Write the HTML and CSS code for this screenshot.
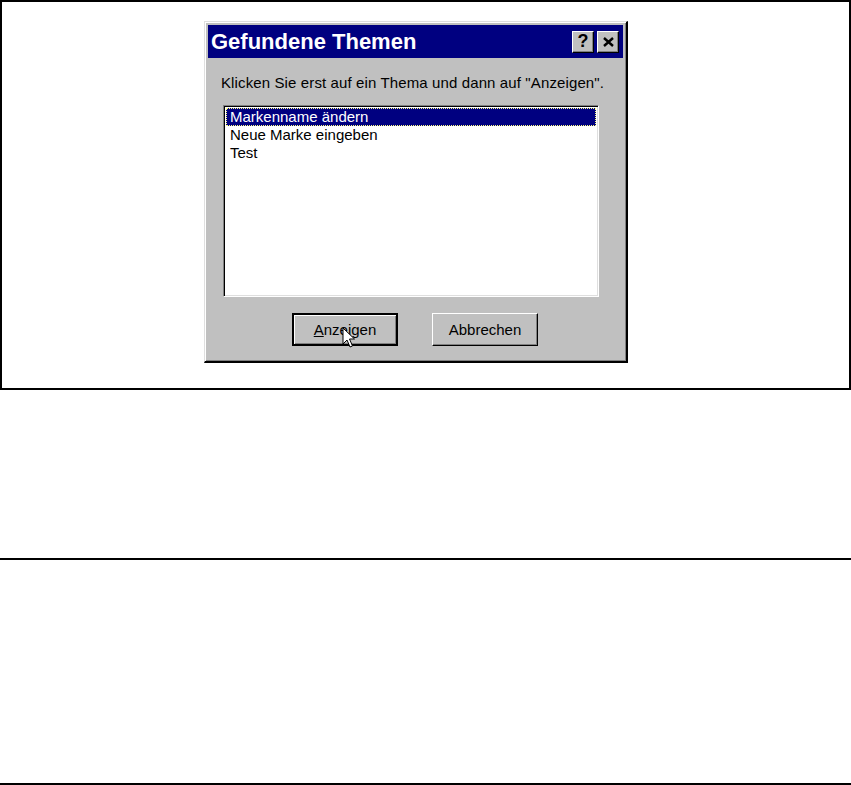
FILE: index.html
```html
<!doctype html>
<html lang="de">
<head>
<meta charset="utf-8">
<title>Gefundene Themen</title>
<link rel="stylesheet" href="styles.css">
</head>
<body>
<div class="frame">
  <div class="dialog">
    <div class="titlebar">
      <span class="title">Gefundene Themen</span>
      <span class="tbtns">
        <span class="tbtn">?</span>
        <span class="tbtn close">
          <svg width="11" height="10" viewBox="0 0 11 10"><path d="M1 1 L10 9 M10 1 L1 9" stroke="#000" stroke-width="2.4"/></svg>
        </span>
      </span>
    </div>
    <div class="body">
      <p class="hint">Klicken Sie erst auf ein Thema und dann auf "Anzeigen".</p>
      <div class="list">
        <div class="item sel">Markenname ändern</div>
        <div class="item">Neue Marke eingeben</div>
        <div class="item">Test</div>
      </div>
      <div class="buttons">
        <div class="btn default"><span><u>A</u>nzeigen</span></div>
        <div class="btn">Abbrechen</div>
        <svg class="cursor" width="14" height="22" viewBox="0 0 14 22"><path d="M1 1 L1 17 L5 13 L8 20 L10.5 19 L7.5 12 L12.5 12 Z" fill="#fff" stroke="#000" stroke-width="1"/></svg>
      </div>
    </div>
  </div>
</div>
<div class="band"></div>
<div class="band2"></div>
</body>
</html>
```
FILE: styles.css
```css
body {
    margin: 0;
    background: #fff;
    font-family: "Liberation Sans", Arial, sans-serif;
}
.frame {
    box-sizing: border-box;
    width: 851px;
    height: 390px;
    border: 2px solid #000;
    padding-top: 19px;
    padding-left: 202px;
}
.dialog {
    box-sizing: border-box;
    width: 424px;
    height: 342px;
    background: #c0c0c0;
    border-top: 1px solid #dfdfdf;
    border-left: 1px solid #dfdfdf;
    border-right: 2px solid #000;
    border-bottom: 2px solid #000;
    box-shadow: inset 1px 1px 0 #fff, inset -1px -1px 0 #808080;
    padding: 3px 3px 3px 3px;
}
.titlebar {
    height: 33px;
    background: #000080;
    display: flex;
    align-items: center;
    justify-content: space-between;
    padding: 0 4px 0 3px;
}
.title {
    color: #fff;
    font-weight: bold;
    font-size: 22px;
}
.tbtns {
    display: flex;
    gap: 3px;
}
.tbtn {
    box-sizing: border-box;
    width: 22px;
    height: 22px;
    background: #c0c0c0;
    border-top: 1px solid #fff;
    border-left: 1px solid #fff;
    border-right: 1px solid #000;
    border-bottom: 1px solid #000;
    box-shadow: inset -1px -1px 0 #808080;
    display: flex;
    align-items: center;
    justify-content: center;
    font-weight: bold;
    font-size: 18px;
    color: #000;
}
.body {
    padding: 0 0 0 15px;
}
.hint {
    margin: 16px 0 0 -2px;
    font-size: 15px;
    letter-spacing: 0.12px;
    height: 20px;
}
.list {
    box-sizing: border-box;
    width: 376px;
    height: 192px;
    margin-top: 11px;
    margin-left: 0;
    background: #fff;
    border-top: 1px solid #808080;
    border-left: 1px solid #808080;
    border-right: 1px solid #fff;
    border-bottom: 1px solid #fff;
    box-shadow: inset 1px 1px 0 #000, inset -1px -1px 0 #dfdfdf;
    padding: 2px;
}
.item {
    font-size: 15px;
    height: 18px;
    line-height: 17px;
    padding-left: 4px;
    color: #000;
}
.item.sel {
    background: #000080;
    color: #fff;
    outline: 1px dotted #ffff80;
    outline-offset: -1px;
}
.buttons {
    position: relative;
    display: flex;
    gap: 34px;
    margin-top: 16px;
    margin-left: 69px;
}
.btn {
    box-sizing: border-box;
    width: 106px;
    height: 33px;
    display: flex;
    align-items: center;
    justify-content: center;
    font-size: 15px;
    background: #c0c0c0;
    border-top: 1px solid #fff;
    border-left: 1px solid #fff;
    border-right: 1px solid #000;
    border-bottom: 1px solid #000;
    box-shadow: inset -1px -1px 0 #808080;
}
.btn.default {
    border: 2px solid #000;
    box-shadow: inset 1px 1px 0 #fff, inset -1px -1px 0 #808080;
}
.cursor {
    position: absolute;
    left: 50px;
    top: 14px;
}
.band {
    height: 168px;
    border-bottom: 2px solid #000;
}
.band2 {
    height: 223px;
    border-bottom: 2px solid #000;
}
```
